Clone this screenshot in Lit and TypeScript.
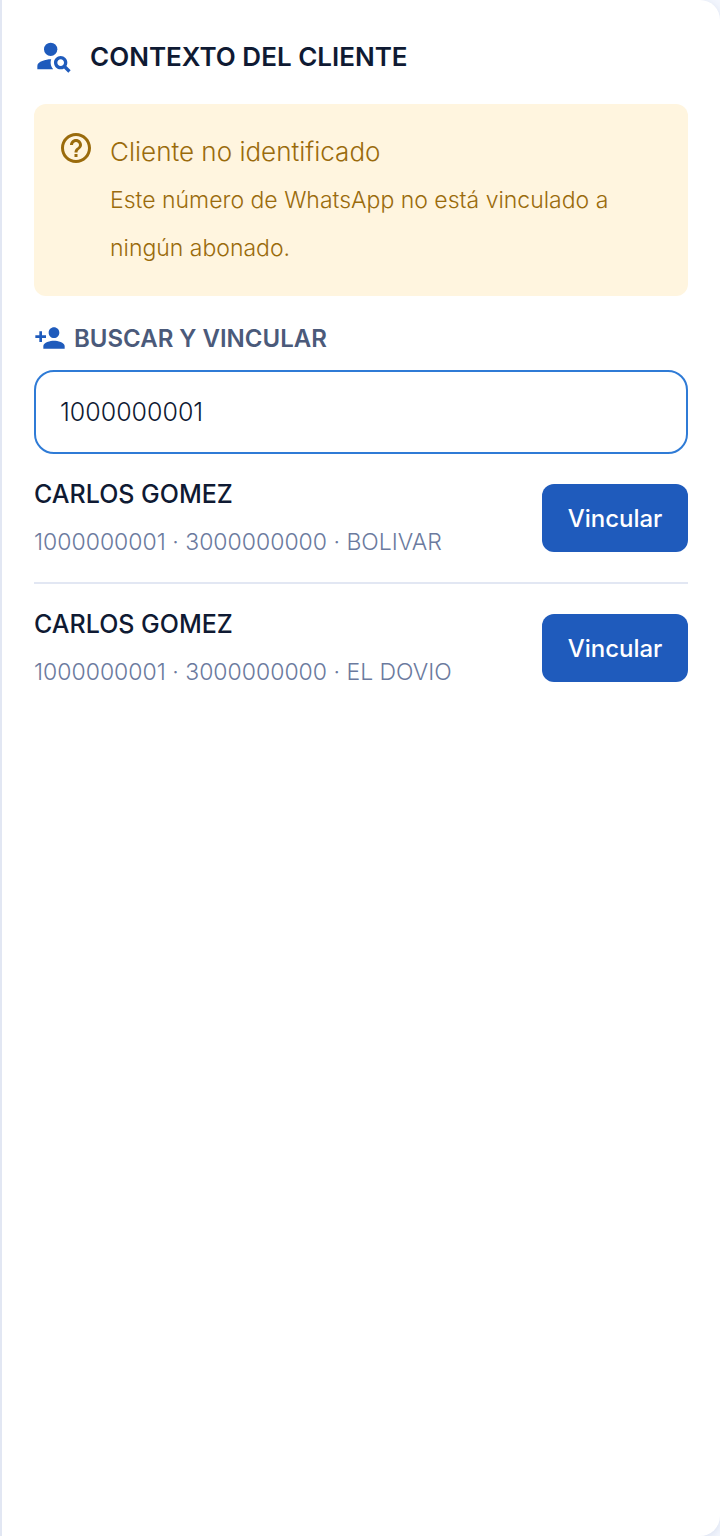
import { html, LitElement, css } from "lit";
import { customElement, property, state } from "lit/decorators.js";

interface Subscriber {
  name: string;
  document: string;
  phone: string;
  city: string;
}

const SUBSCRIBERS: Subscriber[] = [
  {
    name: "CARLOS GOMEZ",
    document: "1000000001",
    phone: "3000000000",
    city: "BOLIVAR",
  },
  {
    name: "CARLOS GOMEZ",
    document: "1000000001",
    phone: "3000000000",
    city: "EL DOVIO",
  },
];

@customElement("subscriber-row")
export class SubscriberRow extends LitElement {
  static styles = css`
    :host {
      display: flex;
      align-items: center;
      justify-content: space-between;
      gap: 16px;
      padding: 16px 0;
    }

    .name,
    .details {
      margin: 0;
      line-height: 48px;
    }

    .name {
      color: #0f1a33;
      font-size: 25px;
      font-weight: 500;
    }

    .details {
      color: #6b7a9e;
      font-size: 23px;
      font-weight: 300;
    }

    button {
      flex: none;
      min-width: 146px;
      height: 68px;
      padding: 0 24px;
      border: 0;
      border-radius: 12px;
      background: #1f5bbc;
      color: #fff;
      font: inherit;
      font-size: 24px;
      font-weight: 500;
      cursor: pointer;
    }
  `;

  @property({ attribute: false })
  subscriber!: Subscriber;

  private onLink() {
    this.dispatchEvent(
      new CustomEvent("link-subscriber", {
        detail: this.subscriber,
        bubbles: true,
      }),
    );
  }

  render() {
    const { name, document, phone, city } = this.subscriber;
    return html`
      <div>
        <p class="name">${name}</p>
        <p class="details">${document} · ${phone} · ${city}</p>
      </div>
      <button type="button" @click=${this.onLink}>Vincular</button>
    `;
  }
}

@customElement("app-root")
export class AppRoot extends LitElement {
  static styles = css`
    :host {
      display: block;
      background: #f3f6fd;
      font-family: Inter, "Liberation Sans", sans-serif;
    }

    * {
      box-sizing: border-box;
    }

    .panel {
      min-height: 100vh;
      padding: 32px;
      border-left: 2px solid #e2e7f3;
      border-radius: 0 20px 20px 0;
      background: #fff;
      box-shadow: 0 2px 8px #d9e0f0;
    }

    svg {
      flex: none;
      display: block;
      fill: currentColor;
    }

    header {
      display: flex;
      align-items: center;
      gap: 16px;
      height: 48px;
      color: #1f5bbc;
    }

    h1,
    h2,
    p {
      margin: 0;
    }

    h1 {
      color: #0f1a33;
      font-size: 26px;
      font-weight: 600;
    }

    .alert {
      display: flex;
      gap: 16px;
      margin-top: 24px;
      padding: 24px;
      border-radius: 12px;
      background: #fff5df;
      color: #9a6b0c;
      font-size: 23px;
      font-weight: 300;
      line-height: 48px;
    }

    .alert svg {
      margin-top: 2px;
    }

    .alert-title {
      font-size: 26px;
    }

    .search-label {
      display: flex;
      align-items: center;
      gap: 8px;
      height: 36px;
      margin: 24px 0 14px;
      color: #1f5bbc;
    }

    .search-label h2 {
      color: #4b5a7a;
      font-size: 24px;
      font-weight: 600;
    }

    input {
      display: block;
      width: 100%;
      height: 84px;
      padding: 0 24px;
      border: 2px solid #2f7bd6;
      border-radius: 20px;
      outline: none;
      background: #fff;
      color: #0f1a33;
      font: inherit;
      font-size: 25px;
      font-weight: 300;
    }

    subscriber-row + subscriber-row {
      border-top: 2px solid #e2e7f3;
    }
  `;

  @state()
  private query = "1000000001";

  private onInput(e: Event) {
    this.query = (e.target as HTMLInputElement).value;
  }

  render() {
    const results = SUBSCRIBERS.filter((s) =>
      `${s.name} ${s.document} ${s.phone}`.includes(this.query.toUpperCase()),
    );
    return html`
      <aside class="panel">
        <header>
          <svg width="40" height="40" viewBox="0 0 24 24" aria-hidden="true">
            <circle cx="10" cy="8" r="4" />
            <path
              d="M10.35 14.01C7.62 13.91 2 15.27 2 18v2h9.54c-2.47-2.76-1.23-5.89-1.19-5.99zM19.43 18.02c.36-.59.57-1.28.57-2.02 0-2.21-1.79-4-4-4s-4 1.79-4 4 1.79 4 4 4c.74 0 1.43-.22 2.02-.57L20.59 22 22 20.59l-2.57-2.57zM16 18c-1.1 0-2-.9-2-2s.9-2 2-2 2 .9 2 2-.9 2-2 2z"
            />
          </svg>
          <h1>CONTEXTO DEL CLIENTE</h1>
        </header>

        <section class="alert" role="status">
          <svg width="36" height="36" viewBox="0 0 24 24" aria-hidden="true">
            <path
              d="M11 18h2v-2h-2v2zm1-16C6.48 2 2 6.48 2 12s4.48 10 10 10 10-4.48 10-10S17.52 2 12 2zm0 18c-4.41 0-8-3.59-8-8s3.59-8 8-8 8 3.59 8 8-3.59 8-8 8zm0-14c-2.21 0-4 1.79-4 4h2c0-1.1.9-2 2-2s2 .9 2 2c0 2-3 1.75-3 5h2c0-2.25 3-2.5 3-5 0-2.21-1.79-4-4-4z"
            />
          </svg>
          <div>
            <p class="alert-title">Cliente no identificado</p>
            <p>
              Este número de WhatsApp no está vinculado a ningún abonado.
            </p>
          </div>
        </section>

        <label class="search-label" for="search">
          <svg width="32" height="32" viewBox="0 0 24 24" aria-hidden="true">
            <path
              d="M15 12c2.21 0 4-1.79 4-4s-1.79-4-4-4-4 1.79-4 4 1.79 4 4 4zm-9-2V7H4v3H1v2h3v3h2v-3h3v-2H6zm9 4c-2.67 0-8 1.34-8 4v2h16v-2c0-2.66-5.33-4-8-4z"
            />
          </svg>
          <h2>BUSCAR Y VINCULAR</h2>
        </label>
        <input
          id="search"
          type="text"
          .value=${this.query}
          @input=${this.onInput}
        />

        ${results.map(
          (s) => html`<subscriber-row .subscriber=${s}></subscriber-row>`,
        )}
      </aside>
    `;
  }
}

declare global {
  interface HTMLElementTagNameMap {
    "app-root": AppRoot;
    "subscriber-row": SubscriberRow;
  }
}
